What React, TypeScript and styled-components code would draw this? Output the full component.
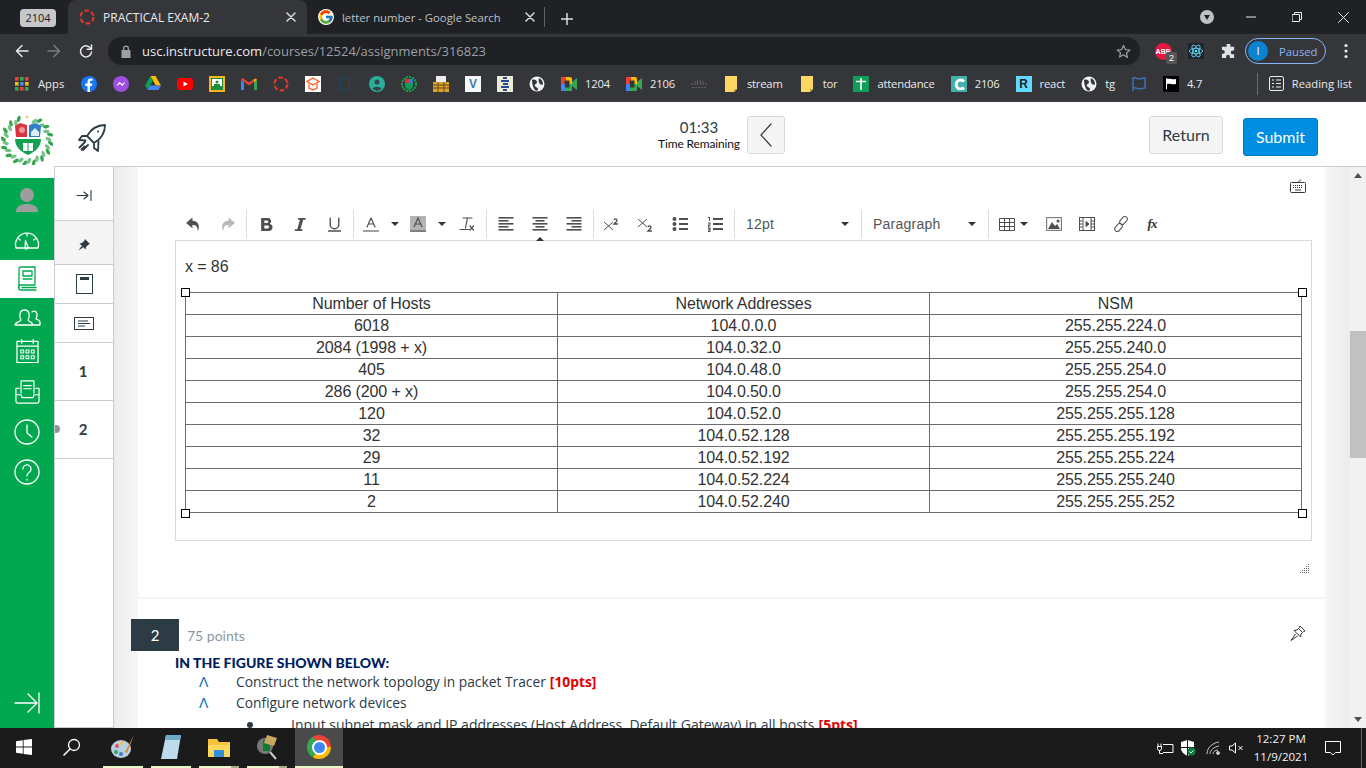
import React from 'react';
import styled, { createGlobalStyle } from 'styled-components';
import { FcGoogle } from 'react-icons/fc';

const GlobalStyle = createGlobalStyle`
  html, body {
    margin: 0;
    padding: 0;
    width: 1366px;
    height: 768px;
    overflow: hidden;
    background: #fff;
    font-family: "Liberation Sans", Arial, sans-serif;
  }
  * { box-sizing: border-box; }
`;

const Shell = styled.div`
  width: 1366px;
  height: 768px;
  display: flex;
  flex-direction: column;
  overflow: hidden;
`;

/* ---------- browser chrome ---------- */

const TabStrip = styled.div`
  height: 34px;
  background: #202124;
  display: flex;
  align-items: flex-end;
  color: #e8eaed;
  font-family: "Open Sans", sans-serif;
  font-size: 12px;
`;

const GroupBadge = styled.div`
  width: 36px;
  height: 18px;
  margin: 0 12px 7px 20px;
  border-radius: 4px;
  background: #c6c7c9;
  color: #202124;
  font-size: 11px;
  line-height: 18px;
  text-align: center;
`;

const Tab = styled.div<{ $active?: boolean; $w: number }>`
  width: ${p => p.$w}px;
  height: 34px;
  display: flex;
  align-items: center;
  gap: 8px;
  padding-left: 11px;
  border-radius: 8px 8px 0 0;
  background: ${p => (p.$active ? '#35363a' : 'transparent')};
  color: ${p => (p.$active ? '#e8eaed' : '#bdc1c6')};
  font-size: ${p => (p.$active ? 12 : 11.3)}px;
`;

const TabTitle = styled.span`
  flex: 1;
  white-space: nowrap;
`;

const TabClose = styled.span<{ $right: number }>`
  display: flex;
  margin-right: ${p => p.$right}px;
  color: #dadce0;
`;

const GoogleDot = styled.span`
  width: 16px;
  height: 16px;
  border-radius: 50%;
  background: #fff;
  display: flex;
`;

const TabDivider = styled.div`
  width: 1px;
  height: 20px;
  background: #5f6368;
  margin: 0 0 7px 7px;
`;

const NewTab = styled.div`
  display: flex;
  margin: 0 auto 9px 16px;
  color: #dadce0;
`;

const WindowButtons = styled.div`
  display: flex;
  align-items: center;
  height: 34px;
  color: #e8eaed;
`;

const WindowButton = styled.div<{ $w: number }>`
  width: ${p => p.$w}px;
  display: flex;
  justify-content: center;
`;

const ProfileDrop = styled.div`
  width: 14px;
  height: 14px;
  border-radius: 50%;
  background: #bdc1c6;
  display: flex;
  align-items: center;
  justify-content: center;
  margin-right: 14px;
`;

const AddressRow = styled.div`
  height: 34px;
  background: #35363a;
  display: flex;
  align-items: center;
  color: #dee1e6;
`;

const NavGlyph = styled.div<{ $w: number; $dim?: boolean }>`
  width: ${p => p.$w}px;
  display: flex;
  justify-content: center;
  color: ${p => (p.$dim ? '#7b7e83' : '#e8eaed')};
`;

const Omnibox = styled.div`
  width: 1032px;
  height: 28px;
  border-radius: 14px;
  background: #202124;
  display: flex;
  align-items: center;
  padding: 0 9px 0 13px;
  font-family: "Open Sans", sans-serif;
  font-size: 13px;
  color: #9aa0a6;
`;

const UrlText = styled.span`
  margin-left: 11px;
  flex: 1;
  white-space: nowrap;
  b {
    font-weight: 400;
    color: #e8eaed;
  }
`;

const ExtSlot = styled.div<{ $w: number; $ml?: number }>`
  position: relative;
  width: ${p => p.$w}px;
  margin-left: ${p => p.$ml ?? 0}px;
  display: flex;
  justify-content: center;
`;

const AbpDisc = styled.span`
  width: 17px;
  height: 17px;
  border-radius: 50%;
  background: #e8173f;
  color: #fff;
  font-size: 7px;
  font-weight: 700;
  line-height: 17px;
  text-align: center;
`;

const AbpBadge = styled.span`
  position: absolute;
  right: 1px;
  top: 9px;
  width: 11px;
  height: 12px;
  background: #555;
  border-radius: 2px;
  color: #fff;
  font-size: 9px;
  line-height: 12px;
  text-align: center;
`;

const ProfilePill = styled.div`
  width: 81px;
  height: 26px;
  margin-left: 1px;
  border: 1px solid #8ab4f8;
  border-radius: 13px;
  display: flex;
  align-items: center;
  padding-left: 2px;
  gap: 11px;
  font-family: "Open Sans", sans-serif;
  font-size: 11.25px;
  color: #8ab4f8;
`;

const ProfileAvatar = styled.span`
  width: 20px;
  height: 20px;
  border-radius: 50%;
  background: #0a84d0;
  color: #fff;
  font-size: 11px;
  line-height: 20px;
  text-align: center;
`;

const Bookmarks = styled.div`
  height: 34px;
  background: #35363a;
  display: flex;
  align-items: center;
  padding: 0 0 2px 14px;
  font-family: "Open Sans", sans-serif;
  font-size: 11.25px;
  letter-spacing: -0.2px;
  color: #e8eaed;
  gap: 16px;
  border-bottom: 1px solid #3c3d41;
`;

const Bookmark = styled.div`
  display: flex;
  align-items: center;
  gap: 8px;
  white-space: nowrap;
`;

const AppsLabel = styled.span`
  width: 27px;
  letter-spacing: 0;
`;

const FavSquare = styled.span<{ $bg: string; $fg?: string }>`
  width: 16px;
  height: 16px;
  flex: none;
  display: flex;
  align-items: center;
  justify-content: center;
  background: ${p => p.$bg};
  color: ${p => p.$fg ?? '#fff'};
  font-size: 12px;
  font-weight: 700;
  font-family: "Liberation Sans", sans-serif;
`;

const ReadingList = styled(Bookmark)`
  margin-left: auto;
  height: 22px;
  border-left: 1px solid #6a6c70;
  padding-left: 11px;
  margin-right: 14px;
  gap: 8px;
  letter-spacing: 0;
`;

/* ---------- canvas page ---------- */

const Workspace = styled.div`
  flex: 1;
  display: flex;
  min-height: 0;
`;

const LeftRail = styled.div`
  width: 54px;
  flex: none;
  display: flex;
  flex-direction: column;
`;

const LogoSlot = styled.div`
  height: 76px;
  padding: 13px 0 0 1px;
`;

const GreenRail = styled.nav`
  flex: 1;
  background: #02a84f;
  display: flex;
  flex-direction: column;
  color: #fff;
`;

const RailItem = styled.div<{ $h: number; $active?: boolean }>`
  height: ${p => p.$h}px;
  display: flex;
  align-items: center;
  justify-content: center;
  background: ${p => (p.$active ? '#fff' : 'transparent')};
  color: ${p => (p.$active ? '#02a84f' : '#fff')};
`;

const RailBottom = styled(RailItem)`
  margin-top: auto;
  margin-bottom: 9px;
`;

const MainColumn = styled.div`
  flex: 1;
  min-width: 0;
  display: flex;
  flex-direction: column;
`;

const Header = styled.header`
  height: 65px;
  flex: none;
  border-bottom: 1px solid #c7cdd1;
  display: flex;
  align-items: flex-start;
  padding-left: 24px;
  color: #2d3b45;
  font-family: Lato, sans-serif;
`;

const RocketSlot = styled.div`
  margin-top: 22px;
  height: 29px;
`;

const Timer = styled.div`
  margin: 18px 0 0 551px;
  width: 84px;
  text-align: center;
`;

const TimerClock = styled.div`
  font-size: 15px;
  line-height: 15px;
  color: #2d3b45;
`;

const TimerLabel = styled.div`
  font-size: 12px;
  line-height: 15px;
  margin-top: 1px;
  letter-spacing: -0.15px;
  color: #111;
  white-space: nowrap;
`;

const BackButton = styled.button`
  width: 38px;
  height: 38px;
  margin: 14px 0 0 6px;
  padding: 0;
  background: #f5f5f5;
  border: 1px solid #d7dadd;
  border-radius: 3px;
  display: flex;
  align-items: center;
  justify-content: center;
  color: #2d3b45;
`;

const ReturnButton = styled.button`
  width: 74px;
  height: 38px;
  margin: 14px 0 0 auto;
  background: #f5f5f5;
  border: 1px solid #d7dadd;
  border-radius: 3px;
  color: #2d3b45;
  font: 16px Lato, sans-serif;
  padding: 0 0 2px;
`;

const SubmitButton = styled.button`
  width: 75px;
  height: 38px;
  margin: 16px 48px 0 20px;
  background: #008ee2;
  border: 1px solid #0079c1;
  border-radius: 3px;
  color: #fff;
  font: 16px Lato, sans-serif;
  padding: 0 0 2px;
`;

const ContentRow = styled.div`
  flex: 1;
  min-height: 0;
  display: flex;
`;

const SideNav = styled.div`
  position: relative;
  width: 60px;
  flex: none;
  border-left: 1px solid #c7cdd1;
  border-right: 1px solid #c7cdd1;
  border-bottom: 1px solid #c7cdd1;
  display: flex;
  flex-direction: column;
`;

const SideCell = styled.div<{ $h: number; $shaded?: boolean; $top?: number }>`
  position: relative;
  height: ${p => p.$h}px;
  flex: none;
  padding-top: ${p => p.$top ?? 0}px;
  border-bottom: 1px solid #c7cdd1;
  background: ${p => (p.$shaded ? '#f5f5f5' : '#fff')};
  display: flex;
  align-items: center;
  justify-content: center;
  color: #2d3b45;
  font: 700 15px Lato, sans-serif;
`;

const PageNumber = styled.span`
  margin: 0 2px 2px 0;
`;

const CurrentDot = styled.span`
  position: absolute;
  left: 0;
  top: 24px;
  width: 5px;
  height: 8px;
  border-radius: 0 4px 4px 0;
  background: #8b969e;
`;

const Gutter = styled.div<{ $w: number; $dir: string }>`
  width: ${p => p.$w}px;
  flex: none;
  background: linear-gradient(${p => p.$dir}, #f6f6f6, #ececec);
`;

const ScrollArea = styled.div`
  width: 1187px;
  flex: none;
  background: #fff;
  display: flex;
  flex-direction: column;
`;

const QuestionOne = styled.section`
  height: 432px;
  flex: none;
  padding-left: 37px;
  border-bottom: 2px solid #f4f4f4;
  display: flex;
  flex-direction: column;
`;

const KeyboardRow = styled.div`
  height: 40px;
  display: flex;
  justify-content: flex-end;
  padding: 12px 19px 0 0;
  color: #2d3b45;
`;

const EditorBar = styled.div`
  height: 33px;
  width: 1137px;
  display: flex;
  align-items: flex-start;
  color: #4f4f4f;
`;

const BarGroup = styled.div<{ $pad?: number; $line?: boolean }>`
  height: 28px;
  margin-top: 3px;
  display: flex;
  align-items: center;
  padding: 0 2px 0 ${p => p.$pad ?? 2}px;
  border-right: ${p => (p.$line === false ? '0' : '1px solid #dcdcdc')};
`;

const BarButton = styled.div<{ $w?: number; $faded?: boolean; $ml?: number }>`
  position: relative;
  width: ${p => p.$w ?? 34}px;
  height: 28px;
  margin-left: ${p => p.$ml ?? 0}px;
  display: flex;
  align-items: center;
  justify-content: center;
  color: ${p => (p.$faded ? '#b9b9b9' : '#4f4f4f')};
`;

const FormulaMark = styled.span`
  font: italic 700 13px "Liberation Serif", serif;
  letter-spacing: -1px;
  margin-right: 3px;
  color: #333;
`;

const Caret = styled.span`
  width: 0;
  height: 0;
  border-left: 4px solid transparent;
  border-right: 4px solid transparent;
  border-top: 4px solid #333;
`;

const CaretCell = styled.div<{ $w: number }>`
  width: ${p => p.$w}px;
  display: flex;
  justify-content: center;
`;

const ActiveMark = styled.span`
  position: absolute;
  left: 13px;
  bottom: -3px;
  border-left: 4px solid transparent;
  border-right: 4px solid transparent;
  border-bottom: 4px solid #333;
`;

const BarSelect = styled.div<{ $w: number; $pad: number }>`
  width: ${p => p.$w}px;
  height: 28px;
  padding: 0 12px 0 ${p => p.$pad}px;
  display: flex;
  align-items: center;
  justify-content: space-between;
  font-size: 14px;
  letter-spacing: 0.25px;
  color: #555;
  border-right: 1px solid #dcdcdc;
  margin-top: 3px;
`;

const EditorBody = styled.div`
  width: 1137px;
  height: 301px;
  border: 1px solid #d9d9d9;
  padding: 15px 9px 0;
  font-size: 16px;
  line-height: 21px;
  letter-spacing: -0.1px;
  color: #333;
`;

const EditorLine = styled.p`
  margin: 0 0 15px;
`;

const TableWrap = styled.div`
  position: relative;
  width: 1117px;
`;

const Handle = styled.span<{ $x: 'left' | 'right'; $y: 'top' | 'bottom' }>`
  position: absolute;
  ${p => p.$x}: ${p => (p.$x === 'left' ? -4 : -5)}px;
  ${p => p.$y}: ${p => (p.$y === 'top' ? -4 : -5)}px;
  width: 9px;
  height: 9px;
  background: #fff;
  border: 1px solid #000;
`;

const SubnetTable = styled.table`
  width: 1117px;
  table-layout: fixed;
  border-collapse: collapse;
  font-size: 16px;
  color: #333;

  td {
    height: 22px;
    padding: 0;
    line-height: 21px;
    text-align: center;
    border: 1px solid #6d6d6d;
  }
`;

const ResizeRow = styled.div`
  width: 1137px;
  margin-top: 23px;
  display: flex;
  justify-content: flex-end;
  padding-right: 2px;
`;

const QuestionHead = styled.div`
  margin: 20px 19px 0 -7px;
  height: 32px;
  flex: none;
  display: flex;
  align-items: flex-start;
  justify-content: space-between;
  color: #2d3b45;
`;

const PinSlot = styled.div`
  margin-top: 6px;
`;

const QuestionMeta = styled.div`
  display: flex;
  align-items: center;
  gap: 8px;
  font: 14px Lato, sans-serif;
  color: #8b969e;
`;

const NumberBadge = styled.div`
  width: 48px;
  height: 32px;
  background: #2d3b45;
  color: #fff;
  font: 15px/32px Lato, sans-serif;
  text-align: center;
`;

const QuestionBody = styled.div`
  padding-left: 37px;
  font: 14px/21px "Open Sans", sans-serif;
  color: #2d3b45;
  flex: none;
`;

const Lead = styled.div`
  font-family: Lato, sans-serif;
  font-weight: 900;
  color: #002060;
  margin: 1px 0 -2px;
`;

const ListRow = styled.div`
  display: flex;
  align-items: center;
  white-space: nowrap;
  padding-left: 24px;
  font-size: 13.8px;
`;

const SubListRow = styled.div`
  display: flex;
  align-items: center;
  white-space: nowrap;
  margin-top: 1px;
  padding-left: 72px;
`;

const ListMark = styled.span`
  width: 37px;
  color: #0070c0;
  font: 14px "Liberation Sans", sans-serif;
`;

const Bullet = styled.span`
  width: 6px;
  height: 6px;
  border-radius: 50%;
  background: #2d3b45;
  margin-right: 38px;
`;

const Points = styled.b`
  color: #e00000;
  margin-left: 4px;
`;

const ScrollBar = styled.div`
  width: 16px;
  flex: none;
  background: #f1f1f1;
  display: flex;
  flex-direction: column;
  align-items: center;
  justify-content: space-between;
`;

const ScrollArrow = styled.span<{ $up?: boolean }>`
  width: 0;
  height: 0;
  margin: 6px 0;
  border-left: 4px solid transparent;
  border-right: 4px solid transparent;
  ${p => (p.$up ? 'border-bottom: 5px solid #505050;' : 'border-top: 5px solid #505050;')}
`;

const ScrollThumb = styled.div`
  width: 16px;
  height: 127px;
  margin-top: 147px;
  margin-bottom: auto;
  background: #c1c1c1;
`;

/* ---------- taskbar ---------- */

const Taskbar = styled.footer`
  height: 40px;
  flex: none;
  background: #1b1b1b;
  display: flex;
  align-items: stretch;
  color: #fff;
`;

const TaskSlot = styled.div<{ $w: number; $active?: boolean; $open?: boolean; $stacked?: boolean }>`
  width: ${p => p.$w}px;
  margin-right: ${p => (p.$open && !p.$active ? 8 : 0)}px;
  display: flex;
  align-items: center;
  justify-content: center;
  background: ${p => (p.$active ? '#4a4a4a' : 'transparent')};
  border-bottom: 2px solid ${p => (p.$open ? '#e6f8c8' : 'transparent')};
  ${p => p.$stacked && 'border-image: linear-gradient(90deg, #e6f8c8 0 31px, #a6ad8c 31px) 1;'}
`;

const ChromeBall = styled.span`
  position: relative;
  width: 24px;
  height: 24px;
  border-radius: 50%;
  background: conic-gradient(#ea4335 0 90deg, #fbbc04 90deg 210deg, #34a853 210deg 330deg, #ea4335 330deg);
  display: flex;
  align-items: center;
  justify-content: center;

  &::after {
    content: '';
    width: 11px;
    height: 11px;
    border-radius: 50%;
    background: #4285f4;
    box-shadow: 0 0 0 2px #fff;
  }
`;

const Tray = styled.div`
  margin-left: auto;
  display: flex;
  align-items: center;
`;

const TrayIcon = styled.div<{ $w: number }>`
  width: ${p => p.$w}px;
  display: flex;
  justify-content: center;
`;

const Clock = styled.div`
  width: 56px;
  margin-left: 7px;
  text-align: center;
  white-space: nowrap;
  font: 11.5px/18px "Open Sans", sans-serif;
  color: #f2f2f2;
`;

const NotifySlot = styled.div`
  width: 46px;
  margin: 0 5px 0 1px;
  display: flex;
  justify-content: center;
`;

const TrayEdge = styled.div`
  width: 1px;
  height: 40px;
  background: #6a6a6a;
  margin-right: 4px;
`;

/* ---------- drawings ---------- */

type SvgProps = { s?: number; children: React.ReactNode; vb?: string; w?: number; h?: number };

const Line = ({ s = 16, w, h, vb = '0 0 16 16', children }: SvgProps) => (
  <svg width={w ?? s} height={h ?? s} viewBox={vb} fill="none" stroke="currentColor" strokeWidth="1.5" strokeLinecap="round" strokeLinejoin="round">
    {children}
  </svg>
);

const Solid = ({ s = 16, w, h, vb = '0 0 16 16', children }: SvgProps) => (
  <svg width={w ?? s} height={h ?? s} viewBox={vb} fill="currentColor">
    {children}
  </svg>
);

const CanvasRing = ({ s = 16 }: { s?: number }) => (
  <svg width={s} height={s} viewBox="0 0 16 16" fill="none">
    <circle cx="8" cy="8" r="6.5" stroke="#e0392b" strokeWidth="2" strokeDasharray="4.6 2.2" />
  </svg>
);

const Drive = () => (
  <svg width="16" height="15" viewBox="0 0 16 15">
    <path d="M5.4 0h5.2L16 9.5h-5.2z" fill="#fbbc04" />
    <path d="M5.4 0 0 9.5 2.6 14l5.3-9.4z" fill="#0f9d58" />
    <path d="M5.2 9.5H16L13.4 14H2.6z" fill="#4285f4" />
  </svg>
);

const Gmail = () => (
  <svg width="16" height="12" viewBox="0 0 16 12">
    <path d="M0 1.5V12h3V4.5z" fill="#4285f4" />
    <path d="M13 4.5V12h3V1.5z" fill="#34a853" />
    <path d="M0 1.5 8 7.5l8-6-1.5-1.5L8 4.5 1.5 0z" fill="#ea4335" />
    <path d="M13 1 16 1.5 13 4.5z" fill="#fbbc04" />
  </svg>
);

const Meet = () => (
  <svg width="16" height="14" viewBox="0 0 16 14">
    <rect x="0" y="0" width="11" height="14" rx="2" fill="#fbbc04" />
    <rect x="0" y="7" width="11" height="7" rx="1" fill="#34a853" />
    <rect x="0" y="0" width="5" height="7" fill="#ea4335" />
    <rect x="3.5" y="3.5" width="5" height="7" fill="#35363a" />
    <path d="M11 5 16 1v12l-5-4z" fill="#34a853" />
    <rect x="0" y="7" width="4" height="7" fill="#4285f4" />
  </svg>
);

const Globe = () => (
  <svg width="16" height="16" viewBox="0 0 16 16">
    <circle cx="8" cy="8" r="7.5" fill="#f1f3f4" />
    <path d="M3 4c2-1 5 0 5 2S5 8 6 10s3 1 3 3-2 2-3 1S3 9 3 4zM10 2c2 1 4 3 4 6 0 1-2 1-3 0s-2-4-1-6z" fill="#35363a" />
  </svg>
);

const Folder = () => (
  <svg width="16" height="16" viewBox="0 0 16 16">
    <path d="M2 0h12v13l-3 3H2z" fill="#fdd663" />
    <path d="M14 13h-3v3z" fill="#c9a33e" />
  </svg>
);

const ReactMark = () => (
  <svg width="16" height="16" viewBox="-12 -12 24 24" fill="none" stroke="#61dafb" strokeWidth="1.3">
    <rect x="-12" y="-12" width="24" height="24" fill="#20232a" stroke="none" />
    <circle r="2" fill="#61dafb" stroke="none" />
    <ellipse rx="10" ry="4" />
    <ellipse rx="10" ry="4" transform="rotate(60)" />
    <ellipse rx="10" ry="4" transform="rotate(120)" />
  </svg>
);

const Crest = () => {
  const leaves = Array.from({ length: 30 }, (_, i) => 20 + i * (320 / 29));
  return (
    <svg width="52" height="50" viewBox="0 0 52 50">
      {leaves.map((a, i) => {
        const x = 26 + (i % 2 ? 24 : 21.5) * Math.sin((a * Math.PI) / 180);
        const y = 25.5 + (i % 2 ? 23 : 20.5) * Math.cos((a * Math.PI) / 180) * -1;
        return (
          <ellipse
            key={a}
            cx={x}
            cy={y}
            rx="1.700"
            ry="3.200"
            fill={i % 2 ? '#35a552' : '#74c487'}
            transform={`rotate(${a + 30} ${x} ${y})`}
          />
        );
      })}
      <circle cx="26" cy="2" r="1.300" fill="#f2c14e" />
      <path d="M14 24h26c0 8-6 13-13 16-7-3-13-8-13-16z" fill="#12a150" />
      <path d="M14 11l5-3 7 2v12H15z" fill="#d9333f" />
      <path d="M40 11l-5-3-7 2v12h11z" fill="#2f80c9" />
      <path d="M30 17l4-4 4 4v4h-8z" fill="#dfeef9" />
      <circle cx="21" cy="15" r="3" fill="#ef9a9a" />
      <rect x="22" y="28" width="10" height="8" fill="#fff" />
      <path d="M27 28v8" stroke="#12a150" />
    </svg>
  );
};

const Crest16 = () => (
  <svg width="16" height="16" viewBox="0 0 16 16">
    <circle cx="8" cy="8" r="7" fill="none" stroke="#1f9e52" strokeWidth="2" strokeDasharray="2 1" />
    <path d="M4 3h8v6c0 3-2 4-4 5-2-1-4-2-4-5z" fill="#0f9d58" />
    <path d="M4 3h4v4H4z" fill="#d9333f" />
    <path d="M8 3h4v4H8z" fill="#2f80c9" />
  </svg>
);

const tableRows = [
  ['Number of Hosts', 'Network Addresses', 'NSM'],
  ['6018', '104.0.0.0', '255.255.224.0'],
  ['2084 (1998 + x)', '104.0.32.0', '255.255.240.0'],
  ['405', '104.0.48.0', '255.255.254.0'],
  ['286 (200 + x)', '104.0.50.0', '255.255.254.0'],
  ['120', '104.0.52.0', '255.255.255.128'],
  ['32', '104.0.52.128', '255.255.255.192'],
  ['29', '104.0.52.192', '255.255.255.224'],
  ['11', '104.0.52.224', '255.255.255.240'],
  ['2', '104.0.52.240', '255.255.255.252'],
];

const alignLines = {
  left: [[0, 15], [0, 10], [0, 15], [0, 10], [0, 15]],
  center: [[0, 15], [3, 9], [0, 15], [3, 9], [0, 15]],
  right: [[0, 15], [5, 10], [0, 15], [5, 10], [0, 15]],
};

const AlignIcon = ({ kind }: { kind: keyof typeof alignLines }) => (
  <svg width="16" height="14" viewBox="0 0 15 14" fill="currentColor">
    {alignLines[kind].map(([x, w], i) => (
      <rect key={i} x={x} y={i * 3} width={w} height="1.600" />
    ))}
  </svg>
);

export default function App() {
  return (
    <Shell>
      <GlobalStyle />

      <TabStrip>
        <GroupBadge>2104</GroupBadge>
        <Tab $active $w={239}>
          <CanvasRing />
          <TabTitle>PRACTICAL EXAM-2</TabTitle>
          <TabClose $right={11}>
            <Line s={10} vb="0 0 10 10"><path d="M1 1l8 8M9 1 1 9" /></Line>
          </TabClose>
        </Tab>
        <Tab $w={230}>
          <GoogleDot><FcGoogle size={16} /></GoogleDot>
          <TabTitle>letter number - Google Search</TabTitle>
          <TabClose $right={2}>
            <Line s={10} vb="0 0 10 10"><path d="M1 1l8 8M9 1 1 9" /></Line>
          </TabClose>
        </Tab>
        <TabDivider />
        <NewTab>
          <Line s={12} vb="0 0 12 12"><path d="M6 0v12M0 6h12" /></Line>
        </NewTab>
        <WindowButtons>
          <ProfileDrop>
            <Solid s={8} vb="0 0 8 8"><path d="M1 2h6L4 7z" fill="#202124" /></Solid>
          </ProfileDrop>
          <WindowButton $w={46}>
            <Line s={10} vb="0 0 10 10"><path d="M0 5h10" strokeWidth="1" /></Line>
          </WindowButton>
          <WindowButton $w={46}>
            <Line s={10} vb="0 0 10 10"><path d="M.5 2.500h7v7h-7zM2.500 2.500v-2h7v7h-2" strokeWidth="1" /></Line>
          </WindowButton>
          <WindowButton $w={46}>
            <Line s={11} vb="0 0 11 11"><path d="M.5.5l10 10M10.500.5l-10 10" strokeWidth="1" /></Line>
          </WindowButton>
        </WindowButtons>
      </TabStrip>

      <AddressRow>
        <NavGlyph $w={44}>
          <Line s={14} vb="0 0 14 14"><path d="M13 7H1.500M7 1.500 1.500 7 7 12.500" /></Line>
        </NavGlyph>
        <NavGlyph $w={20} $dim>
          <Line s={14} vb="0 0 14 14"><path d="M1 7h11.500M7 1.500 12.500 7 7 12.500" /></Line>
        </NavGlyph>
        <NavGlyph $w={44}>
          <Line s={14} vb="0 0 14 14"><path d="M12 5A5.500 5.500 0 1 0 12.500 8" /><path d="M12.500 1v4.200H8.300" /></Line>
        </NavGlyph>
        <Omnibox>
          <Solid w={10} h={13} vb="0 0 10 13">
            <path d="M2 5V3.500a3 3 0 0 1 6 0V5h1.500v8H.5V5zm1.300 0h3.400V3.500a1.700 1.700 0 0 0-3.400 0z" />
          </Solid>
          <UrlText><b>usc.instructure.com</b>/courses/12524/assignments/316823</UrlText>
          <Line s={15} vb="0 0 16 16"><path d="M8 1.500l2 4.400 4.800.5-3.600 3.200 1 4.700L8 11.500l-4.200 2.400 1-4.700L1.200 6.400 6 5.900z" strokeWidth="1.300" /></Line>
        </Omnibox>
        <ExtSlot $w={30} $ml={8}>
          <AbpDisc>ABP</AbpDisc>
          <AbpBadge>2</AbpBadge>
        </ExtSlot>
        <ExtSlot $w={32} $ml={2}><ReactMark /></ExtSlot>
        <ExtSlot $w={32}>
          <Solid s={15} vb="0 0 16 16">
            <path d="M6 1a2 2 0 0 1 4 0v2h4v4h-1.500a2 2 0 0 0 0 4H14v4H9.500v-1.500a2 2 0 0 0-4 0V15H1v-4.500h1a2 2 0 0 0 0-4H1V3h5z" />
          </Solid>
        </ExtSlot>
        <ProfilePill>
          <ProfileAvatar>I</ProfileAvatar>
          Paused
        </ProfilePill>
        <NavGlyph $w={40}>
          <Solid w={4} h={16} vb="0 0 4 16"><circle cx="2" cy="2.500" r="1.600" /><circle cx="2" cy="8" r="1.600" /><circle cx="2" cy="13.500" r="1.600" /></Solid>
        </NavGlyph>
      </AddressRow>

      <Bookmarks>
        <Bookmark>
          <svg width="16" height="16" viewBox="-1 -1 16 16">
            {[0, 1, 2].flatMap(r => [0, 1, 2].map(c => (
              <rect key={`${r}${c}`} x={c * 5} y={r * 5} width="3.600" height="3.600" fill={['#ea4335', '#fbbc04', '#34a853', '#4285f4'][(r + c * 2) % 4]} />
            )))}
          </svg>
          <AppsLabel>Apps</AppsLabel>
        </Bookmark>
        <svg width="16" height="16" viewBox="0 0 16 16"><circle cx="8" cy="8" r="8" fill="#1877f2" /><path d="M9 16v-6h2l.4-2.500H9V6c0-.8.4-1.300 1.400-1.300h1.100V2.600C11 2.500 10.400 2.400 9.800 2.400 7.700 2.400 6.500 3.600 6.500 5.700v1.800H4.300V10h2.200v6z" fill="#fff" /></svg>
        <svg width="16" height="16" viewBox="0 0 16 16"><circle cx="8" cy="8" r="8" fill="#a04ee0" /><path d="M3 10l3.500-4 2.500 2 3.500-2.500L9.500 10 7 8z" fill="#fff" /></svg>
        <Drive />
        <svg width="16" height="12" viewBox="0 0 16 12"><rect width="16" height="12" rx="3" fill="#f00" /><path d="M6.500 3.500v5L11 6z" fill="#fff" /></svg>
        <FavSquare $bg="#f3b71b">
          <svg width="12" height="12" viewBox="0 0 12 12"><rect width="12" height="12" fill="#1e8e3e" /><rect x="1" y="1" width="10" height="7" fill="#fff" /><circle cx="6" cy="4" r="1.500" fill="#1e8e3e" /><rect x="3" y="6" width="6" height="2" fill="#1e8e3e" /></svg>
        </FavSquare>
        <Gmail />
        <CanvasRing />
        <FavSquare $bg="#fff">
          <svg width="14" height="14" viewBox="0 0 14 14" fill="none" stroke="#ff5a1f" strokeWidth="1.300"><path d="M7 1 13 4.500 7 8 1 4.500zM3 7v4l4 2 4-2V7" /></svg>
        </FavSquare>
        <FavSquare $bg="#35363a" $fg="#1d4a63">
          <svg width="12" height="16" viewBox="0 0 12 16" fill="none" stroke="#1d4a63"><rect x="1.500" y="1" width="9" height="14" /></svg>
        </FavSquare>
        <svg width="16" height="16" viewBox="0 0 16 16"><circle cx="8" cy="8" r="8" fill="#27b19b" /><circle cx="8" cy="6" r="2.500" fill="#38424a" /><path d="M3.500 13c1-3 8-3 9 0l-4.500 2z" fill="#38424a" /></svg>
        <Crest16 />
        <svg width="16" height="16" viewBox="0 0 16 16"><rect y="6" width="16" height="10" fill="#d7a431" /><path d="M0 9h16M0 12h16M5 6v10M11 6v10" stroke="#6c4a12" /><rect x="3" y="0" width="10" height="6" fill="#ececec" /></svg>
        <FavSquare $bg="#f5f7fa" $fg="#3a7ca5">V</FavSquare>
        <FavSquare $bg="#ece9d8">
          <svg width="10" height="16" viewBox="0 0 10 16" fill="#234b8f"><path d="M3 1h4v2H3zM1 4h8v2H1zM3 7h5v2H3zM1 10h8v2H1zM3 13h4v2H3z" /></svg>
        </FavSquare>
        <Globe />
        <Bookmark><Meet />1204</Bookmark>
        <Bookmark><Meet />2106</Bookmark>
        <svg width="16" height="10" viewBox="0 0 16 10" stroke="#5f6064" strokeWidth="1.200"><path d="M1 4v2M4 2v4M6.500 1v5M9.500 1v5M12 2v4M15 4v2" /><path d="M1 8.500h14" strokeDasharray="2 1" /></svg>
        <Bookmark><Folder />stream</Bookmark>
        <Bookmark><Folder />tor</Bookmark>
        <Bookmark>
          <FavSquare $bg="#0f9d58">
            <svg width="10" height="12" viewBox="0 0 10 12" stroke="#fff" strokeWidth="1.600"><path d="M0 3.500h10M5 0v12" /></svg>
          </FavSquare>
          attendance
        </Bookmark>
        <Bookmark>
          <FavSquare $bg="#41b0ac"><svg width="12" height="12" viewBox="0 0 12 12" fill="none" stroke="#fff" strokeWidth="3"><path d="M11 3.500a4.500 4.500 0 1 0 0 6" /></svg></FavSquare>
          2106
        </Bookmark>
        <Bookmark>
          <FavSquare $bg="#61dafb" $fg="#20232a">R</FavSquare>
          react
        </Bookmark>
        <Bookmark><Globe />tg</Bookmark>
        <svg width="16" height="16" viewBox="0 0 16 16" fill="none" stroke="#3f6fb5" strokeWidth="1.500"><path d="M2 15V2c3-1 4 1 6 1s3-1 6-1v10c-3 0-4 1-6 1s-3-2-6-1" /></svg>
        <Bookmark>
          <FavSquare $bg="#000">
            <svg width="12" height="11" viewBox="0 0 12 11" fill="#fff"><path d="M1 0v11h1V6c3-1 5 1 9 0V1C7 2 5 0 2 1V0z" /></svg>
          </FavSquare>
          4.7
        </Bookmark>
        <ReadingList>
          <svg width="15" height="15" viewBox="0 0 15 15" fill="none" stroke="#e8eaed"><rect x=".5" y=".5" width="14" height="14" rx="1.500" /><path d="M3 4h2M7 4h5M3 7.500h2M7 7.500h5M3 11h2M7 11h5" /></svg>
          Reading list
        </ReadingList>
      </Bookmarks>

      <Workspace>
        <LeftRail>
          <LogoSlot><Crest /></LogoSlot>
          <GreenRail>
            <RailItem $h={44}>
              <svg width="24" height="26" viewBox="0 0 24 26"><circle cx="12" cy="8" r="7" fill="#9d9d9d" /><path d="M1 25c0-6 5-8 11-8s11 2 11 8z" fill="#9d9d9d" /></svg>
            </RailItem>
            <RailItem $h={38}>
              <Line w={28} h={20} vb="0 0 28 20"><path d="M3 17A11.500 11.500 0 1 1 25 17zM14 3.500v1.500M6 8l1.200 1M22 8l-1.200 1M12.500 9.500 15 16a1.500 1.500 0 0 1-3 1z" strokeWidth="1.300" /></Line>
            </RailItem>
            <RailItem $h={38} $active>
              <Line w={22} h={26} vb="0 0 22 26"><path d="M3 22V3a2 2 0 0 1 2-2h14v18H5a2 2 0 0 0 0 5h15M6 21.500h14M7 5h9v5H7zM7 13h9" strokeWidth="1.300" /></Line>
            </RailItem>
            <RailItem $h={38}>
              <Line w={27} h={17} vb="0 0 27 17"><path d="M1 16c0-3 5-3 6-5-2-3-2-10 3.500-10S16 8 14 11c1 2 3 2 4 3l.5 2zM18 3c3-2 5 0 5 3 0 2-1 3-1 4 2 1 4 1 4 3v3h-7.500" strokeWidth="1.300" /></Line>
            </RailItem>
            <RailItem $h={30}>
              <Line w={23} h={26} vb="0 0 24 26"><path d="M1 3h22v22H1zM1 8h22M6 1v4M18 1v4" strokeWidth="1.300" /><path d="M5 12h3v3H5zM10.500 12h3v3h-3zM16 12h3v3h-3zM5 18h3v3H5zM10.500 18h3v3h-3zM16 18h3v3h-3z" strokeWidth="1.100" /></Line>
            </RailItem>
            <RailItem $h={51}>
              <Line w={27} h={24} vb="0 0 28 26"><path d="M7 14V1h14v13M10 6h8M10 9.500h8M5 9H1.500v14a2 2 0 0 0 2 2h21a2 2 0 0 0 2-2V9H23M1.500 16H7l1 3h12l1-3h5.500" strokeWidth="1.300" /></Line>
            </RailItem>
            <RailItem $h={30}>
              <Line s={26} vb="0 0 26 26"><circle cx="13" cy="13" r="12" strokeWidth="1.300" /><path d="M13 6v8l5 4" strokeWidth="1.300" /></Line>
            </RailItem>
            <RailItem $h={50}>
              <Line s={26} vb="0 0 26 26"><circle cx="13" cy="13" r="12" strokeWidth="1.300" /><path d="M9 10a4 4 0 1 1 6.500 3c-1.500 1-2.500 2-2.500 4M13 20.500v.5" strokeWidth="1.300" /></Line>
            </RailItem>
            <RailBottom $h={32}>
              <Line w={26} h={22} vb="0 0 26 22"><path d="M1 11h21M14 2l9 9-9 9M25 1v20" strokeWidth="1.300" /></Line>
            </RailBottom>
          </GreenRail>
        </LeftRail>

        <MainColumn>
          <Header>
            <RocketSlot>
              <Line w={28} h={28} vb="0 0 28 28">
                <path d="M27 1c-8 0-14 4-18 11l7 7c7-4 11-10 11-18zM9 12H4l-3 4 6.500.5M16 19v5l4 3 .5-9.500M20 7.500h.1M7 18l-5.500 5.500M10 21l-5 5M6.500 22.500l-3 3" strokeWidth="1.800" />
              </Line>
            </RocketSlot>
            <Timer>
              <TimerClock>01:33</TimerClock>
              <TimerLabel>Time Remaining</TimerLabel>
            </Timer>
            <BackButton>
              <Line w={14} h={24} vb="0 0 14 24"><path d="M12 1 2 12l10 11" strokeWidth="1.200" /></Line>
            </BackButton>
            <ReturnButton>Return</ReturnButton>
            <SubmitButton>Submit</SubmitButton>
          </Header>

          <ContentRow>
            <SideNav>
              <SideCell $h={54} $top={4}>
                <Line w={16} h={11} vb="0 0 16 11"><path d="M1 5.500h11M8 2l4 3.500L8 9M15 .5v10" strokeWidth="1.100" /></Line>
              </SideCell>
              <SideCell $h={44} $shaded $top={5}>
                <Solid s={12} vb="0 0 12 12"><path d="M7 0l5 5-1.500.5L8 8l-.5 2.500L1.500 4.500 4 4l2.500-2.500zM3.500 7 .5 11.500 5 8.500z" /></Solid>
              </SideCell>
              <SideCell $h={39}>
                <svg width="17" height="20" viewBox="0 0 17 20" fill="none"><rect x=".5" y=".5" width="16" height="19" stroke="#2d3b45" /><rect x="4" y="3" width="9" height="3" fill="#2d3b45" /></svg>
              </SideCell>
              <SideCell $h={39}>
                <svg width="20" height="13" viewBox="0 0 20 13" fill="none" stroke="#2d3b45"><rect x=".5" y=".5" width="19" height="12" /><path d="M4 4h10M4 6.500h12M4 9h7" /></svg>
              </SideCell>
              <SideCell $h={58}><PageNumber>1</PageNumber></SideCell>
              <SideCell $h={58}><CurrentDot /><PageNumber>2</PageNumber></SideCell>
            </SideNav>

            <Gutter $w={24} $dir="to left" />

            <ScrollArea>
              <QuestionOne>
                <KeyboardRow>
                  <svg width="16" height="14" viewBox="0 0 16 14" fill="none" stroke="#2d3b45"><rect x=".5" y="3.500" width="15" height="10" rx="1" /><path d="M3 6.500h10M3 8.500h10" strokeDasharray="1 1" /><path d="M5 11h6M8 3.500 11 .5" /></svg>
                </KeyboardRow>

                <EditorBar>
                  <BarGroup $pad={1}>
                    <BarButton>
                      <Solid s={17}><path d="M7 1.500 1 6.500l6 5V8.500c3 0 5 1 5 6 2.500-5 .5-10-5-10z" /></Solid>
                    </BarButton>
                    <BarButton $faded>
                      <Solid s={17}><path d="M9 1.500l6 5-6 5V8.500c-3 0-5 1-5 6-2.500-5-.5-10 5-10z" /></Solid>
                    </BarButton>
                  </BarGroup>
                  <BarGroup>
                    <BarButton><Solid s={15} vb="0 0 14 14"><path d="M2 1h6a3 3 0 0 1 2 5.500A3.200 3.200 0 0 1 8.500 13H2zm3 2.300v2.400h2.500a1.200 1.200 0 0 0 0-2.400zM5 8v2.700h3a1.350 1.350 0 0 0 0-2.700z" /></Solid></BarButton>
                    <BarButton><Solid s={15} vb="0 0 14 14"><path d="M5 1h7l-.5 1.500H9.500L7 11.500h2L8.500 13h-7l.5-1.500h2l2.500-9h-2z" /></Solid></BarButton>
                    <BarButton><Line s={15} vb="0 0 14 14"><path d="M3 1v6a4 4 0 0 0 8 0V1M1.500 13h11" strokeWidth="1.300" /></Line></BarButton>
                  </BarGroup>
                  <BarGroup>
                    <BarButton $w={30}><Line s={16}><path d="M4 11 8 2l4 9M5.500 8h5" strokeWidth="1.200" /><path d="M0 15h16" strokeWidth="1.500" stroke="#808080" /></Line></BarButton>
                    <CaretCell $w={17}><Caret /></CaretCell>
                    <BarButton $w={30}>
                      <svg width="16" height="16" viewBox="0 0 16 16" fill="none" stroke="#4f4f4f" strokeWidth="1.200"><rect width="16" height="16" fill="#b3b3b3" stroke="none" /><path d="M4 11 8 2l4 9M5.500 8h5" /><path d="M0 15h16" stroke="#808080" strokeWidth="2" /></svg>
                    </BarButton>
                    <CaretCell $w={17}><Caret /></CaretCell>
                    <BarButton><Line s={16}><path d="M4 2h9M8.500 2 6.500 12M1 13.500h9M11 10l3.500 4M14.500 10 11 14" strokeWidth="1.200" /></Line></BarButton>
                  </BarGroup>
                  <BarGroup $pad={2}>
                    <BarButton><AlignIcon kind="left" /></BarButton>
                    <BarButton><AlignIcon kind="center" /><ActiveMark /></BarButton>
                    <BarButton><AlignIcon kind="right" /></BarButton>
                  </BarGroup>
                  <BarGroup $pad={0}>
                    <BarButton><svg width="16" height="16" viewBox="0 0 16 16" fill="none" stroke="#4f4f4f"><path d="M1 6l9 8M10 6l-9 8" /><path d="M11 4a1.500 1.500 0 1 1 2.500 1.500L11 8h4" strokeWidth="1.300" /></svg></BarButton>
                    <BarButton><svg width="16" height="16" viewBox="0 0 16 16" fill="none" stroke="#4f4f4f"><path d="M1 3l9 8M10 3l-9 8" /><path d="M11 11a1.500 1.500 0 1 1 2.500 1.500L11 15h4" strokeWidth="1.300" /></svg></BarButton>
                    <BarButton $w={36}>
                      <Solid s={16}><circle cx="2.500" cy="3" r="2" /><circle cx="2.500" cy="8" r="2" /><circle cx="2.500" cy="13" r="2" /><path d="M7 2h9v2H7zM7 7h9v2H7zM7 12h9v2H7z" /></Solid>
                    </BarButton>
                    <BarButton>
                      <Solid s={16}><path d="M1 1h2v4H2V2H1zM1 6.500h2.500v3H2v1h1.500v1H1v-3h1.500v-1H1zM1 12h2.500v4H1v-1h1.500v-.5H1v-1h1.500V13H1zM6 2h10v2H6zM6 7h10v2H6zM6 12h10v2H6z" /></Solid>
                    </BarButton>
                  </BarGroup>
                  <BarSelect $w={127} $pad={11}>12pt<Caret /></BarSelect>
                  <BarSelect $w={127} $pad={11}>Paragraph<Caret /></BarSelect>
                  <BarGroup $pad={10} $line={false}>
                    <BarButton $w={16}>
                      <svg width="16" height="13" viewBox="0 0 16 13" fill="none" stroke="#4f4f4f"><path d="M.5 .5h15v12H.5zM.5 4.500h15M.5 8.500h15M5.500 .5v12M10.500 .5v12" /></svg>
                    </BarButton>
                    <CaretCell $w={18}><Caret /></CaretCell>
                    <BarButton $w={24} $ml={9}>
                      <svg width="16" height="14" viewBox="0 0 16 14" fill="none" stroke="#808080" strokeWidth="1.200"><rect x=".6" y=".6" width="14.800" height="12.800" /><path d="M2 12l4-7 3 4 2-2 3 5z" fill="#4f4f4f" stroke="none" /><circle cx="12" cy="4" r="1.500" fill="#4f4f4f" stroke="none" /></svg>
                    </BarButton>
                    <BarButton $w={35} $ml={3}>
                      <svg width="16" height="14" viewBox="0 0 16 14" fill="none" stroke="#4f4f4f"><rect x=".5" y=".5" width="15" height="13" /><path d="M4 .5v13M12 .5v13M.5 4h3M.5 7h3M.5 10h3M12 4h3M12 7h3M12 10h3" /><path d="M7 4.500v5L10 7z" fill="#4f4f4f" /></svg>
                    </BarButton>
                    <BarButton $w={33}>
                      <svg width="16" height="16" viewBox="0 0 16 16" fill="none" stroke="#4f4f4f">
                        <rect x="8" y="0" width="5" height="9" rx="2.500" transform="rotate(40 10.500 4.500)" />
                        <rect x="3" y="7" width="5" height="9" rx="2.500" transform="rotate(40 5.500 11.500)" />
                      </svg>
                    </BarButton>
                    <BarButton $w={33}>
                      <FormulaMark>fx</FormulaMark>
                    </BarButton>
                  </BarGroup>
                </EditorBar>

                <EditorBody>
                  <EditorLine>x = 86</EditorLine>
                  <TableWrap>
                    <SubnetTable>
                      <tbody>
                        {tableRows.map(row => (
                          <tr key={row[0]}>
                            {row.map((cell, i) => <td key={i}>{cell}</td>)}
                          </tr>
                        ))}
                      </tbody>
                    </SubnetTable>
                    <Handle $x="left" $y="top" />
                    <Handle $x="right" $y="top" />
                    <Handle $x="left" $y="bottom" />
                    <Handle $x="right" $y="bottom" />
                  </TableWrap>
                </EditorBody>

                <ResizeRow>
                  <svg width="10" height="10" viewBox="0 0 10 10" fill="#666">
                    {[[8, 0], [6, 2], [8, 2], [4, 4], [6, 4], [8, 4], [2, 6], [4, 6], [6, 6], [8, 6], [0, 8], [2, 8], [4, 8], [6, 8], [8, 8]].map(([x, y]) => (
                      <rect key={`${x}-${y}`} x={x} y={y} width="1" height="1" />
                    ))}
                  </svg>
                </ResizeRow>
              </QuestionOne>

              <QuestionHead>
                <QuestionMeta>
                  <NumberBadge>2</NumberBadge>
                  <span>75 points</span>
                </QuestionMeta>
                <PinSlot>
                  <svg width="16" height="17" viewBox="0 0 16 17" fill="none" stroke="#2d3b45"><path d="M10 1l5 5-1.500.5L11 9l-.5 3L4 5.500l3-.5 2.500-2.500zM5.500 9 1 15.500 7.500 11M8 3l5 5" /></svg>
                </PinSlot>
              </QuestionHead>

              <QuestionBody>
                <Lead>IN THE FIGURE SHOWN BELOW:</Lead>
                <ListRow>
                  <ListMark>Λ</ListMark>
                  Construct the network topology in packet Tracer <Points>[10pts]</Points>
                </ListRow>
                <ListRow>
                  <ListMark>Λ</ListMark>
                  Configure network devices
                </ListRow>
                <SubListRow>
                  <Bullet />
                  Input subnet mask and IP addresses (Host Address, Default Gateway) in all hosts <Points>[5pts]</Points>
                </SubListRow>
              </QuestionBody>
            </ScrollArea>

            <Gutter $w={25} $dir="to right" />

            <ScrollBar>
              <ScrollArrow $up />
              <ScrollThumb />
              <ScrollArrow />
            </ScrollBar>
          </ContentRow>
        </MainColumn>
      </Workspace>

      <Taskbar>
        <TaskSlot $w={48}>
          <svg width="16" height="16" viewBox="0 0 16 16" fill="#fff"><path d="M0 2.200 6.800 1.200v6.400H0zM7.600 1.100 16 0v7.600H7.600zM0 8.400h6.800v6.400L0 13.800zM7.600 8.400H16V16l-8.400-1.100z" /></svg>
        </TaskSlot>
        <TaskSlot $w={47}>
          <Line s={18} vb="0 0 18 18"><circle cx="11" cy="7" r="5.500" strokeWidth="1.300" /><path d="M7 11l-6 6" strokeWidth="1.600" /></Line>
        </TaskSlot>
        <TaskSlot $w={8} />
        <TaskSlot $w={40} $open>
          <svg width="26" height="26" viewBox="0 0 26 26"><ellipse cx="11" cy="15" rx="10" ry="9" fill="#b7cfe0" /><circle cx="7" cy="12" r="2" fill="#e2574c" /><circle cx="12" cy="9" r="2" fill="#f2c14e" /><circle cx="6" cy="18" r="2" fill="#3c9d5d" /><circle cx="11" cy="20" r="2" fill="#3f7bc0" /><path d="M24 1l-7 18-2-1z" fill="#d6893a" /></svg>
        </TaskSlot>
        <TaskSlot $w={40} $open>
          <svg width="24" height="28" viewBox="0 0 24 28"><path d="M7 2h15l-4 24H2z" fill="#bcdcea" /><path d="M7 2h15l-1 5H6z" fill="#6fa9c6" /></svg>
        </TaskSlot>
        <TaskSlot $w={40} $open $stacked>
          <svg width="24" height="22" viewBox="0 0 24 22"><path d="M1 3h9l2 3h11v15H1z" fill="#f5c33b" /><rect x="1" y="9" width="22" height="12" fill="#fbd75b" /><rect x="7" y="14" width="10" height="7" fill="#2f8fd8" /></svg>
        </TaskSlot>
        <TaskSlot $w={40} $open $stacked>
          <svg width="26" height="28" viewBox="0 0 26 28"><circle cx="11" cy="13" r="8" fill="#777" /><rect x="9" y="7" width="7" height="11" fill="#0b7f2f" /><path d="M13 2l10 3-3 8-10-3z" fill="#c9a763" /><path d="M16 19l6 7" stroke="#ccc" strokeWidth="2" /></svg>
        </TaskSlot>
        <TaskSlot $w={48} $active $open>
          <ChromeBall />
        </TaskSlot>
        <Tray>
          <TrayIcon $w={22}>
            <svg width="17" height="12" viewBox="0 0 17 12" fill="none" stroke="#fff"><path d="M6 2.500h10v8H6M1 1.500v3M4 1.500v3M.5 4.500h4v2a2 2 0 0 1-4 0zM2.500 8.500v3H6" /></svg>
          </TrayIcon>
          <TrayIcon $w={24}>
            <svg width="16" height="16" viewBox="0 0 16 16"><path d="M7.500 0 14 2v6c0 4-3 6-6.500 8C4 14 1 12 1 8V2z" fill="#fff" /><path d="M7 0h1v16H7zM1 7h13v1H1z" fill="#1b1b1b" /><circle cx="11.500" cy="11.500" r="4" fill="#107c41" /><path d="M9.500 11.500l1.500 1.500 2.500-2.500" stroke="#fff" fill="none" /></svg>
          </TrayIcon>
          <TrayIcon $w={26}>
            <svg width="14" height="14" viewBox="0 0 14 14" fill="none" stroke="#c8c8c8"><path d="M1 13C1 7 6 2 13 1M4 13c0-4 4-7 9-8M7 13c0-2 2-4 5-4" /><circle cx="12" cy="12" r="1.500" fill="#c8c8c8" /></svg>
          </TrayIcon>
          <TrayIcon $w={20}>
            <svg width="15" height="12" viewBox="0 0 15 12" fill="none" stroke="#fff"><path d="M.5 4v4h2.500L6.500 11V1L3 4zM9.500 4l4 4M13.500 4l-4 4" /></svg>
          </TrayIcon>
          <Clock>
            12:27 PM
            <br />
            11/9/2021
          </Clock>
          <NotifySlot>
            <svg width="16" height="15" viewBox="0 0 16 15" fill="none" stroke="#fff"><path d="M.5 .5h15v11H10.500l-2.500 2.500-2.500-2.500H.5z" /></svg>
          </NotifySlot>
          <TrayEdge />
        </Tray>
      </Taskbar>
    </Shell>
  );
}
